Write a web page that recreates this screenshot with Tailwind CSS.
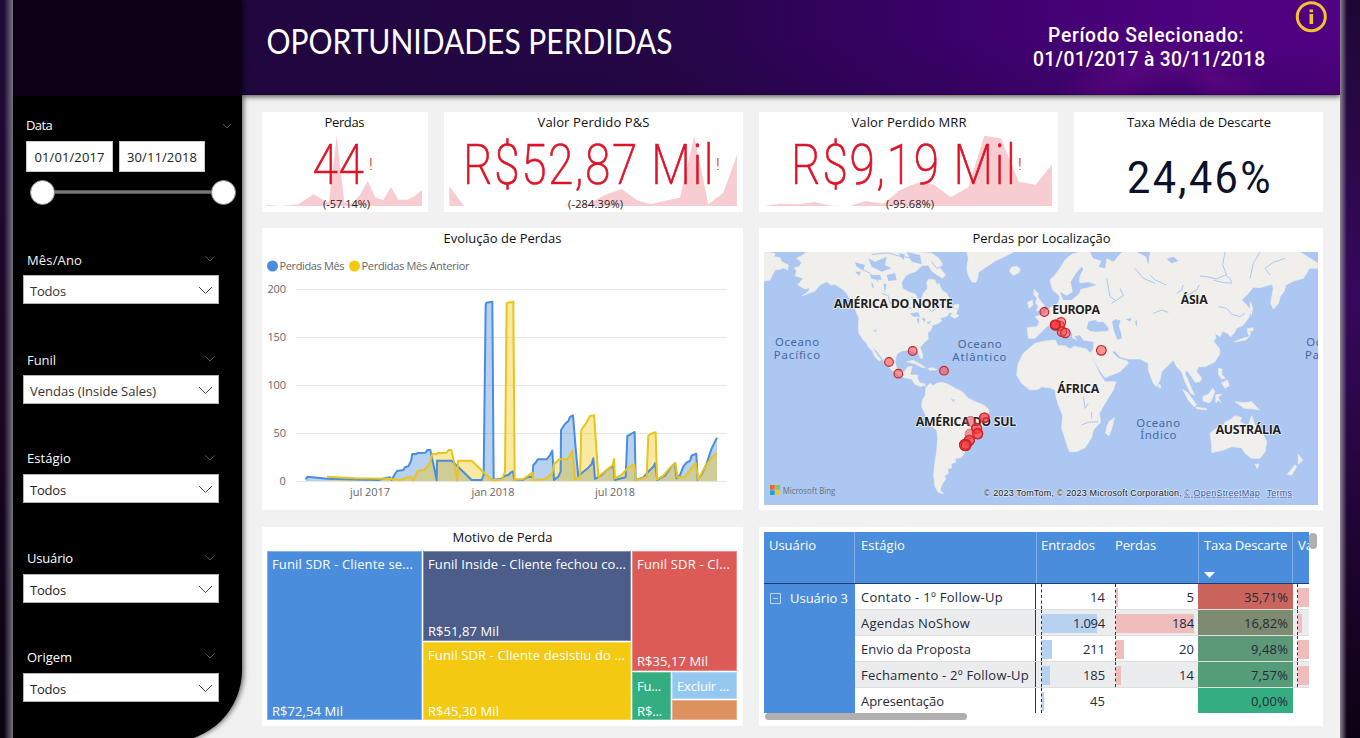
<!DOCTYPE html>
<html lang="pt-BR">
<head>
<meta charset="utf-8">
<title>Oportunidades Perdidas</title>
<script src="https://cdn.jsdelivr.net/npm/@tailwindcss/browser@4"></script>
</head>
<body class="w-[1360px] h-[738px] overflow-hidden bg-[#12031f] font-['Open_Sans','Noto_Sans',sans-serif]">
<div class="flex w-[1360px] h-[738px] overflow-hidden">

  <!-- left backdrop -->
  <div class="w-[13px] shrink-0 flex justify-end bg-linear-to-b from-[#1d0b38] via-[#1c0726] to-[#080410]">
    <div class="w-[9px] h-full bg-linear-to-r from-transparent to-[#77717f]"></div>
  </div>

  <!-- report -->
  <div class="relative w-[1327px] h-[738px] shrink-0 bg-[#f1f1f1] flex overflow-hidden">

    <!-- sidebar -->
    <aside class="relative z-20 w-[229px] h-[742px] shrink-0 bg-black rounded-br-[72px] shadow-[2px_0_5px_rgba(0,0,0,0.55)] text-white text-[13px]">
      <div class="h-24 bg-[#0d0017]"></div>
      <div class="h-[154px] pl-[13px] pt-5">
        <div class="flex items-center justify-between h-[19px] pr-[10px] leading-[19px]"><span data-w="26">Data</span>
          <svg class="w-[10px] h-[6px]" viewBox="0 0 10 6"><path d="M1 1l4 4 4-4" fill="none" stroke="#555" stroke-width="1"/></svg></div>
        <div class="flex gap-[6px] mt-[6px] text-[#222] leading-[31px] text-center">
          <div class="w-[87px] h-[31px] bg-white border border-[#c8c8c8]"><span data-w="70">01/01/2017</span></div>
          <div class="w-[86px] h-[31px] bg-white border border-[#c8c8c8]"><span data-w="70">30/11/2018</span></div>
        </div>
        <div class="flex items-center mt-[7px] ml-[4px] w-[206px] h-[26px]">
          <div class="size-[25px] shrink-0 rounded-full bg-white border border-[#888]"></div>
          <div class="grow h-[4px] bg-[#777] border-y border-[#555]"></div>
          <div class="size-[25px] shrink-0 rounded-full bg-white border border-[#888]"></div>
        </div>
      </div>
      <div class="pl-[10px]">
        <div class="h-[100px]">
          <div class="flex justify-between items-center h-[25px] pl-[4px] pr-[4px] w-[196px] pb-[4px]"><span data-w="55" class="font-medium text-[#f4f4f4]">Mês/Ano</span><svg class="w-[10px] h-[6px] mb-[3px]" viewBox="0 0 10 6"><path d="M.5.5L5 5 9.500.5" fill="none" stroke="#555"/></svg></div>
          <div class="w-[196px] h-[29px] bg-white border border-[#b5b5b5] flex items-center justify-between pl-[6px] pr-[5px] pt-[4px] text-[#333]"><span data-w="36">Todos</span><svg class="w-[15px] h-[9px] mb-[2px]" viewBox="0 0 15 9"><path d="M1 1l6.500 6.500L14 1" fill="none" stroke="#444"/></svg></div>
        </div>
        <div class="h-[99px]">
          <div class="flex justify-between items-center h-[25px] pl-[4px] pr-[4px] w-[196px] pb-[4px]"><span data-w="29" class="font-medium text-[#f4f4f4]">Funil</span><svg class="w-[10px] h-[6px] mb-[3px]" viewBox="0 0 10 6"><path d="M.5.5L5 5 9.500.5" fill="none" stroke="#555"/></svg></div>
          <div class="w-[196px] h-[29px] bg-white border border-[#b5b5b5] flex items-center justify-between pl-[6px] pr-[5px] pt-[4px] text-[#333]"><span data-w="126">Vendas (Inside Sales)</span><svg class="w-[15px] h-[9px] mb-[2px]" viewBox="0 0 15 9"><path d="M1 1l6.500 6.500L14 1" fill="none" stroke="#444"/></svg></div>
        </div>
        <div class="h-[100px]">
          <div class="flex justify-between items-center h-[25px] pl-[4px] pr-[4px] w-[196px] pb-[5px]"><span data-w="44">Estágio</span><svg class="w-[10px] h-[6px] mb-[2px]" viewBox="0 0 10 6"><path d="M.5.5L5 5 9.500.5" fill="none" stroke="#555"/></svg></div>
          <div class="w-[196px] h-[29px] bg-white border border-[#b5b5b5] flex items-center justify-between pl-[6px] pr-[5px] pt-[4px] text-[#222]"><span data-w="36">Todos</span><svg class="w-[15px] h-[9px] mb-[2px]" viewBox="0 0 15 9"><path d="M1 1l6.500 6.500L14 1" fill="none" stroke="#444"/></svg></div>
        </div>
        <div class="h-[99px]">
          <div class="flex justify-between items-center h-[25px] pl-[4px] pr-[4px] w-[196px] pb-[5px]"><span data-w="46">Usuário</span><svg class="w-[10px] h-[6px] mb-[2px]" viewBox="0 0 10 6"><path d="M.5.5L5 5 9.500.5" fill="none" stroke="#555"/></svg></div>
          <div class="w-[196px] h-[29px] bg-white border border-[#b5b5b5] flex items-center justify-between pl-[6px] pr-[5px] pt-[4px] text-[#222]"><span data-w="36">Todos</span><svg class="w-[15px] h-[9px] mb-[2px]" viewBox="0 0 15 9"><path d="M1 1l6.500 6.500L14 1" fill="none" stroke="#444"/></svg></div>
        </div>
        <div>
          <div class="flex justify-between items-center h-[25px] pl-[4px] pr-[4px] w-[196px] pb-[5px]"><span data-w="45">Origem</span><svg class="w-[10px] h-[6px] mb-[4px]" viewBox="0 0 10 6"><path d="M.5.5L5 5 9.500.5" fill="none" stroke="#555"/></svg></div>
          <div class="w-[196px] h-[29px] bg-white border border-[#b5b5b5] flex items-center justify-between pl-[6px] pr-[5px] pt-[4px] text-[#222]"><span data-w="36">Todos</span><svg class="w-[15px] h-[9px] mb-[2px]" viewBox="0 0 15 9"><path d="M1 1l6.500 6.500L14 1" fill="none" stroke="#444"/></svg></div>
        </div>
      </div>
    </aside>

    <div class="w-[1098px] shrink-0">
      <!-- header -->
      <header class="h-[95px] shadow-[0_2px_5px_rgba(0,0,0,0.6)] relative">
        <svg class="block w-[1098px] h-[95px]" viewBox="242 0 1098 95">
          <defs>
            <linearGradient id="hd" x1="0" x2="1" y1="0" y2="0"><stop offset="0" stop-color="#21063f"/><stop offset=".38" stop-color="#250646"/><stop offset=".52" stop-color="#30035a"/><stop offset=".64" stop-color="#3a0169"/><stop offset=".8" stop-color="#49017a"/><stop offset="1" stop-color="#510183"/></linearGradient>
            <radialGradient id="gl"><stop offset="0" stop-color="#7a0a90" stop-opacity=".35"/><stop offset="1" stop-color="#7a0a90" stop-opacity="0"/></radialGradient>
            <linearGradient id="sh" x1="0" x2="0" y1="0" y2="1"><stop offset=".4" stop-color="#180630" stop-opacity="0"/><stop offset="1" stop-color="#180630" stop-opacity=".2"/></linearGradient>
          </defs>
          <rect x="242" width="1098" height="95" fill="url(#hd)"/>
          <rect x="242" width="1098" height="95" fill="url(#sh)"/>
          <ellipse cx="1130" cy="75" rx="90" ry="28" fill="url(#gl)" transform="rotate(-22 1130 75)"/>
          <ellipse cx="1215" cy="80" rx="60" ry="20" fill="url(#gl)" transform="rotate(20 1215 78)"/>
          <rect x="242" y="94" width="1098" height="1" fill="#000" opacity=".25"/>
          <text x="266.500" y="53.500" font-family="Lato" font-size="34" fill="#fff" textLength="406" lengthAdjust="spacingAndGlyphs">OPORTUNIDADES PERDIDAS</text>
          <g font-family="Roboto" font-weight="500" font-size="20.500" fill="#fff" transform="scale(.94 1)">
            <text x="1115" y="42" textLength="208">Período Selecionado:</text>
            <text x="1099" y="66" textLength="247">01/01/2017 à 30/11/2018</text>
          </g>
          <circle cx="1311.300" cy="16.700" r="14" fill="none" stroke="#f2c230" stroke-width="3"/>
          <path d="M1309.500 9.500h3.600v2.700h-3.600zM1309.500 14h3.600v10h-3.600z" fill="#f2c230"/>
        </svg>
      </header>

      <main class="pl-5 pt-[17px] flex flex-col gap-4">
        <!-- KPI cards -->
        <div class="flex gap-4 h-[100px]">
          <section class="w-[166px] bg-white">
            <svg class="block w-[166px] h-[100px]" viewBox="262 112 166 100">
              <g transform="translate(255 105) scale(.33333)"><path fill="#f8cdd2" d="M35 303V300L80 303 130 298 175 268 213 290 222 292 245 92 268 292 290 298 315 270 338 228 362 278 385 285 408 246 430 284 457 284 478 274 501 256V303Z"/></g>
              <text x="324.500" y="127" font-size="13" fill="#111" textLength="40">Perdas</text>
              <text transform="translate(312.500 184) scale(.83 1)" font-family="Roboto" font-weight="200" stroke="#dd1528" stroke-width=".7" font-size="55.500" fill="#dd1528" textLength="62">44</text>
              <text x="369" y="170" font-family="Roboto" font-weight="300" font-size="17" fill="#dd1528">!</text>
              <text x="323" y="208" font-size="11" fill="#252423" textLength="47">(-57.14%)</text>
            </svg>
          </section>
          <section class="w-[299px] bg-white">
            <svg class="block w-[299px] h-[100px]" viewBox="444 112 299 100">
              <g transform="translate(255 105) scale(.33333)"><path fill="#f8cdd2" d="M583 303V244L627 303ZM920 303L1000 296 1050 270 1100 252 1145 286 1188 298 1230 287 1275 278 1318 92 1360 298 1405 263 1446 150V303Z"/></g>
              <text x="537.500" y="127" font-size="13" fill="#111" textLength="112">Valor Perdido P&amp;S</text>
              <text transform="translate(463 184) scale(.83 1)" font-family="Roboto" font-weight="200" stroke="#dd1528" stroke-width=".7" font-size="55.500" fill="#dd1528" textLength="302">R$52,87 Mil</text>
              <text x="716" y="170" font-family="Roboto" font-weight="300" font-size="17" fill="#dd1528">!</text>
              <text x="568" y="208" font-size="11" fill="#252423" textLength="55">(-284.39%)</text>
            </svg>
          </section>
          <section class="w-[299px] bg-white">
            <svg class="block w-[299px] h-[100px]" viewBox="759 112 299 100">
              <g transform="translate(750 105) scale(.33333)"><path fill="#f8cdd2" d="M45 303L90 296 145 298 195 291 245 302 300 303 347 288 400 296 450 255 500 234 550 238 602 277 655 247 703 92 753 100 806 230 857 239 906 178V303Z"/></g>
              <text x="851.500" y="127" font-size="13" fill="#111" textLength="115">Valor Perdido MRR</text>
              <text transform="translate(791 184) scale(.83 1)" font-family="Roboto" font-weight="200" stroke="#dd1528" stroke-width=".7" font-size="55.500" fill="#dd1528" textLength="271">R$9,19 Mil</text>
              <text x="1018" y="170" font-family="Roboto" font-weight="300" font-size="17" fill="#dd1528">!</text>
              <text x="886" y="208" font-size="11" fill="#252423" textLength="48">(-95.68%)</text>
            </svg>
          </section>
          <section class="w-[249px] bg-white">
            <svg class="block w-[249px] h-[100px]" viewBox="1074 112 249 100">
              <text x="1127" y="127" font-size="13" fill="#111" textLength="144">Taxa Média de Descarte</text>
              <text transform="translate(1127 192.500) scale(.92 1)" font-family="Roboto" font-size="45" fill="#0b1226" textLength="156">24,46%</text>
            </svg>
          </section>
        </div>

        <div class="flex gap-4 h-[282px]">
          <!-- line chart -->
          <section class="w-[481px] bg-white">
            <svg class="block w-[481px] h-[282px]" viewBox="262 228 481 282">
              <text x="443.500" y="243" font-size="13" fill="#111" textLength="118">Evolução de Perdas</text>
              <circle cx="272.500" cy="266" r="5.500" fill="#4a8ddc"/><circle cx="354.500" cy="266" r="5.500" fill="#f3c911"/>
              <g font-size="11" fill="#666">
                <text x="279.500" y="270" textLength="65">Perdidas Mês</text>
                <text x="361.500" y="270" textLength="108">Perdidas Mês Anterior</text>
                <text x="267.500" y="293" textLength="18.500">200</text><text x="267.500" y="341" textLength="18.500">150</text><text x="267.500" y="389" textLength="18.500">100</text><text x="273.500" y="437" textLength="12.500">50</text><text x="279.500" y="485">0</text>
                <text x="350" y="496" textLength="40">jul 2017</text><text x="471.500" y="496" textLength="43">jan 2018</text><text x="595" y="496" textLength="40">jul 2018</text>
              </g>
              <path d="M296 289.500H727M296 337.500H727M296 385.500H727M296 433.500H727M296 481.500H727" stroke="#e6e6e6"/>
              <g transform="translate(255 225) scale(.33333)" stroke-linejoin="round">
                <path fill="#4a8ddc" fill-opacity=".4" d="M152 768V763L158 755 216 761 370 765 395 758 405 757 410 765 418 750 426 738 445 735 450 727 460 724 468 708 472 687 485 687 487 684 512 683 517 675 526 675 530 695 540 740 545 766 546 707 590 707 610 726 650 765 680 765 686 750 692 240 694 233 712 230 716 764 738 762 750 752 760 750 768 742 774 739 778 764 805 764 815 757 832 755 835 720 843 712 848 703 875 703 885 690 892 677 897 765 910 755 917 740 918 615 930 597 940 588 945 576 954 571 962 670 970 755 985 740 1000 728 1010 717 1015 700 1020 762 1040 750 1055 735 1075 722 1079 765 1112 757 1117 633 1130 626 1139 621 1142 765 1165 757 1178 742 1195 725 1200 715 1207 765 1230 752 1245 730 1260 715 1265 760 1275 750 1285 725 1295 712 1305 708 1310 692 1324 686 1328 765 1340 748 1355 715 1370 670 1386 638V768Z"/>
                <path fill="#f3c911" fill-opacity=".4" d="M216 768V755L300 760 400 761 435 765 465 755 475 766 488 738 508 735 515 727 524 715 532 687 575 683 580 675 589 675 597 710 607 767 609 707 650 707 710 765 740 765 750 740 755 234 775 230 779 764 805 762 832 743 835 765 870 763 892 745 897 718 912 703 938 702 945 692 952 677 960 765 975 755 979 615 995 592 1005 573 1017 571 1022 640 1030 755 1055 735 1073 720 1077 702 1080 760 1100 750 1117 730 1138 718 1143 766 1175 755 1180 632 1193 624 1202 622 1206 763 1225 752 1245 728 1262 715 1267 757 1290 755 1305 735 1322 714 1330 764 1350 725 1365 705 1375 692 1386 686V768Z"/>
                <path fill="none" stroke="#4a8ddc" stroke-width="6" d="M152 763L158 755 216 761 370 765 395 758 405 757 410 765 418 750 426 738 445 735 450 727 460 724 468 708 472 687 485 687 487 684 512 683 517 675 526 675 530 695 540 740 545 766 546 707 590 707 610 726 650 765 680 765 686 750 692 240 694 233 712 230 716 764 738 762 750 752 760 750 768 742 774 739 778 764 805 764 815 757 832 755 835 720 843 712 848 703 875 703 885 690 892 677 897 765 910 755 917 740 918 615 930 597 940 588 945 576 954 571 962 670 970 755 985 740 1000 728 1010 717 1015 700 1020 762 1040 750 1055 735 1075 722 1079 765 1112 757 1117 633 1130 626 1139 621 1142 765 1165 757 1178 742 1195 725 1200 715 1207 765 1230 752 1245 730 1260 715 1265 760 1275 750 1285 725 1295 712 1305 708 1310 692 1324 686 1328 765 1340 748 1355 715 1370 670 1386 638"/>
                <path fill="none" stroke="#eac41c" stroke-width="6" d="M216 755L300 760 400 761 435 765 465 755 475 766 488 738 508 735 515 727 524 715 532 687 545 687 548 684 575 683 580 675 589 675 597 710 607 767 609 707 650 707 710 765 740 765 750 740 755 234 775 230 779 764 805 762 832 743 835 765 870 763 892 745 897 718 912 703 938 702 945 692 952 677 960 765 975 755 979 615 995 592 1005 573 1017 571 1022 640 1030 755 1055 735 1073 720 1077 702 1080 760 1100 750 1117 730 1138 718 1143 766 1175 755 1180 632 1193 624 1202 622 1206 763 1225 752 1245 728 1262 715 1267 757 1290 755 1305 735 1322 714 1330 764 1350 725 1365 705 1375 692 1386 686"/>
              </g>
            </svg>
          </section>

          <!-- map -->
          <section class="w-[564px] bg-white">
            <svg class="block w-[564px] h-[282px]" viewBox="759 228 564 282">
              <text x="972.500" y="243" font-size="13" fill="#111" textLength="138">Perdas por Localização</text>
              <svg x="764" y="252" width="554" height="253" viewBox="27 81 1662 759" preserveAspectRatio="none">
                <rect x="27" y="81" width="1662" height="759" fill="#abc7f2"/>
                <g fill="#f0efeb" stroke="#f0efeb" stroke-width="2" stroke-linejoin="round">
                  <path d="M27 81L60 85 58 95 75 98 80 110 100 120 98 135 85 128 75 133 60 135 52 150 45 165 27 168Z"/>
                  <path d="M155 81L140 92 125 100 140 112 133 125 118 128 125 138 120 152 145 160 128 180 150 192 165 188 160 200 142 212 180 198 195 180 215 170 228 180 240 178 262 192 275 205 284 220 290 235 300 252 305 265 312 280 310 300 312 325 325 345 333 352 340 365 352 378 358 392 372 408 378 405 360 380 352 368 366 378 380 398 392 415 405 430 430 450 450 458 470 462 480 478 498 485 506 480 512 484 508 476 495 474 488 462 487 450 465 450 468 438 472 424 458 426 448 440 430 440 424 425 420 410 424 392 428 385 440 378 460 375 475 380 487 378 492 388 496 400 503 400 502 385 495 368 505 355 520 342 518 325 530 312 532 300 548 296 560 288 555 280 575 274 585 262 600 270 608 256 592 250 580 256 572 244 588 232 582 218 575 205 560 195 552 175 545 180 540 165 522 162 515 172 518 190 505 205 498 228 488 222 482 208 460 200 442 190 440 172 452 152 465 145 482 140 500 122 520 120 530 138 550 152 562 160 572 150 555 130 562 118 552 100 530 85 500 81Z"/>
                  <path d="M635 81L640 100 635 130 640 150 650 170 662 172 668 160 670 142 695 125 720 108 748 95 775 81Z"/>
                  <path d="M764 140L768 128 785 124 796 132 790 144 775 151Z"/>
                  <path d="M586 272L598 262 612 272 600 280ZM596 240L612 238 610 252 598 250Z"/>
                  <path d="M838 194L850 206 848 216 860 232 868 240 864 252 844 258 850 244 842 234 846 220 836 208ZM818 232L832 226 834 240 822 250Z"/>
                  <path d="M512 490L525 475 535 482 545 475 560 472 580 478 600 490 622 500 640 520 660 530 690 542 702 555 698 575 685 590 680 615 672 638 650 650 638 665 632 680 618 698 600 700 602 712 588 716 590 728 578 732 580 745 568 752 572 762 562 776 555 795 566 806 550 802 540 785 536 750 540 710 545 680 548 640 545 615 525 600 512 570 500 545 502 525 512 510Z"/>
                  <path d="M455 410L475 406 500 420 512 428 500 427 480 416ZM518 430L535 428 546 434 525 436Z"/>
                  <path d="M840 355L870 348 900 345 910 362 930 362 945 372 958 364 995 372 1005 385 1020 415 1033 445 1050 470 1083 470 1075 495 1050 535 1033 565 1037 592 1015 615 1010 638 990 668 965 680 943 680 933 650 920 610 923 570 910 540 903 515 900 495 885 488 860 485 850 493 825 495 800 475 785 450 790 415 805 385 820 372Z"/>
                  <path d="M1055 605L1062 590 1078 578 1072 605 1062 632 1052 625Z"/>
                  <g transform="translate(855)">
                    <path d="M-35 340L-38 308 -8 305 -2 290 -15 275 10 268 30 248 55 235 60 215 50 205 38 195 30 165 45 150 60 130 75 105 95 88 120 81H780L834 115V130L808 130 800 145 790 160 760 168 738 180 732 200 720 215 716 235 700 252 692 235 700 190 696 178 660 188 640 187 625 205 605 225 620 240 632 255 628 275 610 300 590 310 582 325 572 335 562 325 548 318 540 335 525 325 528 340 520 348 538 370 540 385 525 410 495 425 475 425 470 440 485 460 480 470 465 472 455 455 440 435 435 445 450 480 463 510 452 505 435 470 425 440 410 425 400 405 385 420 365 440 360 465 350 485 340 475 325 435 325 415 300 402 265 402 240 395 225 378 215 380 235 400 262 408 265 415 240 440 195 458 185 445 165 410 150 385 160 372 162 350 130 345 120 330 102 332 110 345 98 338 90 318 75 305 62 300 85 320 88 335 62 322 50 308 40 300 22 303 0 325 -15 340Z"/>
                    <path d="M583 350L600 348 618 345 630 330 632 322 622 318 628 335 608 340ZM620 312L640 308 638 318 625 318ZM632 230L638 250 634 270 630 250Z"/>
                    <path d="M488 515L505 508 518 490 525 500 520 512 512 530 505 533 490 528ZM428 493L445 505 470 540 462 545 445 525ZM468 546L500 551 498 555 470 551ZM527 510L545 508 534 516 542 532 534 525 528 534ZM585 530L610 533 635 530 658 555 640 552 612 550 600 540ZM536 430L546 432 545 448 556 460 545 462 536 448ZM545 475L562 465 568 482 555 490Z"/>
                    <path d="M510 625L530 610 550 600 556 590 570 585 585 572 605 578 600 590 625 603 635 572 645 600 665 620 680 650 675 680 660 700 635 700 615 685 605 668 575 665 550 675 515 683 515 660ZM645 718L657 718 652 731ZM742 748L765 720 770 725 755 750ZM775 688L788 705 775 718ZM357 478L362 480 362 488 356 488Z"/>
                  </g>
                </g>
                <g fill="#abc7f2">
                  <path d="M340 100L360 110 395 95 390 120 410 130 380 140 350 125ZM345 150L375 150 380 165 350 162ZM455 81L470 110 500 118 495 90ZM395 150L420 145 425 165 400 168ZM430 85L450 88 445 105ZM300 112L330 120 325 135 305 125ZM300 140L318 140 312 152ZM385 175L395 178 390 205ZM350 168L358 190 350 185ZM355 316L366 316 362 322ZM465 265L490 262 495 275 475 275ZM485 280L493 280 490 300ZM500 278L512 282 508 292ZM515 292L530 288 520 298Z"/>
                  <g transform="translate(855)">
                    <path d="M60 200L80 212 98 200 92 170 108 145 125 125 130 132 118 155 118 175 145 172 170 180 140 188 122 192 118 205 95 225 70 225ZM160 100L185 108 175 125 195 130 200 100 220 110 245 81 150 81ZM140 310L145 290 165 285 175 292 190 290 205 308 205 318 165 320 150 318ZM216 290L228 282 242 288 236 302 242 320 246 340 232 344 222 318ZM290 81L330 81 325 120 318 95ZM380 102L400 95 415 108 395 115ZM82 308L90 316 98 330 92 335 80 318ZM258 282L275 280 270 290ZM285 290L292 284 290 305Z"/>
                  </g>
                </g>
                <g fill="none" stroke="#abc7f2" stroke-width="3" stroke-linejoin="round">
                  <path d="M380 205L400 212 405 235 430 225 445 245 470 250M470 215L485 240 510 240 530 260 575 225M505 225L530 235 550 225M350 88L400 84 440 95 480 100M315 130L345 145 370 170M530 110L545 130 560 125M590 520L595 530 600 522M985 515L990 550 1000 535M1010 560L1010 580M980 600L1000 592 1030 590"/>
                  <g transform="translate(855)">
                    <path d="M480 153L500 155 530 162 555 150 570 160 575 175 545 172 520 165M555 81L548 120 560 150M660 81L640 115 630 160M735 100L700 112 675 130 690 150M535 245L560 250 575 268 600 275 615 265M330 150L345 165 380 180M200 160L210 215 225 225M215 235L250 212 240 190M410 205L425 195 430 180M440 212L470 195 478 180M285 130L310 160 345 175M340 265L365 255 385 262"/>
                  </g>
                </g>
                <g font-weight="700" font-size="37" fill="#222" stroke="#fff" stroke-opacity=".65" stroke-width="5" paint-order="stroke" stroke-linejoin="round">
                  <text x="237" y="248" textLength="357">AMÉRICA DO NORTE</text>
                  <text x="892" y="267" textLength="143">EUROPA</text>
                  <text x="1277" y="236" textLength="81">ÁSIA</text>
                  <text x="907" y="504" textLength="126">ÁFRICA</text>
                  <text x="482" y="604" textLength="302">AMÉRICA DO SUL</text>
                  <text x="1382" y="628" textLength="196">AUSTRÁLIA</text>
                </g>
                <g font-size="34" fill="#47699f" font-family="Noto Sans">
                  <text x="60" y="364" textLength="132">Oceano</text><text x="56" y="401" textLength="139">Pacífico</text>
                  <text x="608" y="370" textLength="132">Oceano</text><text x="592" y="407" textLength="162">Atlântico</text>
                  <text x="1144" y="606" textLength="131">Oceano</text><text x="1156" y="643" textLength="108">Índico</text>
                  <text x="1654" y="364" textLength="132">Oceano</text><text x="1650" y="401" textLength="139">Pacífico</text>
                </g>
                <g fill="#ff3b3b" fill-opacity=".5" stroke="#c8242c" stroke-width="3.500">
                  <circle cx="868" cy="261" r="13"/><circle cx="473" cy="378" r="13"/><circle cx="402" cy="411" r="13"/><circle cx="430" cy="446" r="13"/><circle cx="567" cy="437" r="13"/><circle cx="1039" cy="376" r="14.500"/>
                  <circle cx="918" cy="292" r="14"/><circle cx="914" cy="302" r="14"/><circle cx="921" cy="320" r="14"/><circle cx="931" cy="324" r="14"/><circle cx="901" cy="300" r="15"/><circle cx="901" cy="300" r="15"/><circle cx="902" cy="300" r="12"/>
                  <circle cx="688" cy="578" r="14"/><circle cx="688" cy="578" r="14"/><circle cx="665" cy="610" r="15"/><circle cx="665" cy="610" r="15"/><circle cx="668" cy="625" r="15"/><circle cx="668" cy="627" r="15"/><circle cx="643" cy="646" r="15"/><circle cx="643" cy="646" r="15"/><circle cx="631" cy="660" r="17"/><circle cx="631" cy="660" r="17"/><circle cx="632" cy="660" r="13"/>
                </g>
                <g fill="#e83b45" fill-opacity=".5" stroke="#c8242c" stroke-opacity=".4" stroke-width="3"><circle cx="647" cy="589" r="15"/><circle cx="645" cy="627" r="15"/></g>
                <path d="M45 780h14v14h-14z" fill="#f1652a"/><path d="M61 780h14v14h-14z" fill="#8dc63f"/><path d="M45 796h14v14h-14z" fill="#1ba1e2"/><path d="M61 796h14v14h-14z" fill="#ffc20e"/>
                <text x="83" y="806" font-size="25" fill="#6a7078" textLength="158" lengthAdjust="spacingAndGlyphs">Microsoft Bing</text>
                <g font-family="Liberation Sans" font-size="27" stroke="#fff" stroke-opacity=".55" stroke-width="4" paint-order="stroke">
                  <text x="686" y="812" fill="#222" textLength="594">© 2023 TomTom, © 2023 Microsoft Corporation,</text>
                  <text x="1287" y="812" fill="#3a55a0" text-decoration="underline" textLength="227">© OpenStreetMap</text>
                  <text x="1535" y="812" fill="#3a55a0" text-decoration="underline" textLength="76">Terms</text>
                </g>
              </svg>
            </svg>
          </section>
        </div>

        <div class="flex gap-4 h-[199px] mt-px">
          <!-- treemap -->
          <section class="w-[481px] bg-white px-[5px] text-white text-[13px]">
            <h2 class="h-6 leading-[21px] text-center text-[#111]"><span data-w="100">Motivo de Perda</span></h2>
            <div class="flex gap-px h-[169px] leading-[18px] whitespace-nowrap">
              <div class="w-[155px] bg-[#4a8ddc] border border-white/30 flex flex-col justify-between px-1 pt-[3px]"><span><span data-w="141">Funil SDR - Cliente se...</span></span><span class="-mb-px"><span data-w="71">R$72,54 Mil</span></span></div>
              <div class="w-[208px] flex flex-col gap-px">
                <div class="h-[90px] bg-[#4c5d8a] border border-white/30 flex flex-col justify-between px-1 pt-[3px]"><span><span data-w="198">Funil Inside - Cliente fechou co...</span></span><span><span data-w="71">R$51,87 Mil</span></span></div>
                <div class="h-[78px] bg-[#f3c911] border border-white/30 flex flex-col justify-between px-1 pt-[3px]"><span><span data-w="197">Funil SDR - Cliente desistiu do ...</span></span><span class="-mb-px"><span data-w="71">R$45,30 Mil</span></span></div>
              </div>
              <div class="w-[105px] flex flex-col gap-px">
                <div class="h-[120px] bg-[#dc5b57] border border-white/30 flex flex-col justify-between px-1 pt-[3px]"><span><span data-w="93">Funil SDR - Cl...</span></span><span><span data-w="71">R$35,17 Mil</span></span></div>
                <div class="flex gap-px h-[48px]">
                  <div class="w-[39px] bg-[#33ae81] border border-white/30 flex flex-col justify-between px-1 pt-[4px]"><span><span data-w="24">Fu...</span></span><span class="-mb-px"><span data-w="25">R$...</span></span></div>
                  <div class="w-[65px] flex flex-col gap-px">
                    <div class="h-[27px] bg-[#95c8f0] border border-white/30 px-1 pt-[4px]"><span data-w="52">Excluir ...</span></div>
                    <div class="h-[20px] bg-[#dd915f] border border-white/30"></div>
                  </div>
                </div>
              </div>
            </div>
          </section>

          <!-- matrix -->
          <section class="w-[564px] bg-white pl-[5px] pt-[5px] text-[13px] text-[#252a3a]">
            <div class="flex h-[181px]">
              <div class="w-[545px] h-[181px] overflow-hidden">
                <div class="flex h-[52px] bg-[#4a8ddc] border-b border-[#1d3f70] text-white leading-[26px] whitespace-nowrap">
                  <div class="w-[91px] shrink-0 pl-[5px] border-r border-white/30"><span data-w="47">Usuário</span></div>
                  <div class="w-[182px] shrink-0 pl-[6px] border-r border-white/30"><span data-w="44">Estágio</span></div>
                  <div class="w-[73px] shrink-0 pl-[4px]"><span data-w="54">Entrados</span></div>
                  <div class="w-[89px] shrink-0 pl-[5px] border-r border-white/30"><span data-w="41">Perdas</span></div>
                  <div class="w-[94px] shrink-0 pl-[5px] border-r border-white/30"><span data-w="83">Taxa Descarte</span>
                    <svg class="block mt-[14px] w-[11px] h-[6px]" viewBox="0 0 11 6"><path d="M0 0h11L5.500 6z" fill="#fff"/></svg></div>
                  <div class="shrink-0 pl-[5px]"><span data-w="31">Valor</span></div>
                </div>
                <div class="flex h-[129px]">
                  <div class="w-[91px] shrink-0 bg-[#4a8ddc] text-white h-full flex gap-[9px] pl-[6px] leading-[28px]">
                    <svg class="w-[11px] h-[11px] mt-[9px]" viewBox="0 0 11 11"><path d="M.5.5h10v10H.5zM3 5.500h5" fill="none" stroke="#bcd6f5"/></svg><span class="font-medium"><span data-w="58">Usuário 3</span></span>
                  </div>
                  <div class="w-[454px] shrink-0 leading-[27px] whitespace-nowrap">
                    <div class="flex h-[26px] border-b border-[#ddd]">
                      <div class="w-[181px] pl-[6px] border-r border-[#333] shrink-0"><span data-w="142">Contato - 1º Follow-Up</span></div>
                      <div class="w-[79px] flex pl-[5px] shrink-0 items-start"><div class="w-px h-full border-l border-dashed border-[#334]"></div><div class="grow text-right pr-[10px]"><span data-w="15">14</span></div></div>
                      <div class="w-[83px] flex shrink-0 items-start"><div class="h-full border-l border-dashed border-[#433]"></div><div class="w-[2px] h-[19px] mt-1 bg-[#f1bcbc]"></div><div class="grow text-right pr-[4px]">5</div></div>
                      <div class="w-[95px] h-[25px] bg-[#cb645c] text-right pr-[5px] shrink-0"><span data-w="44">35,71%</span></div>
                      <div class="w-[16px] pl-[4px] flex shrink-0"><div class="h-full border-l border-dashed border-[#433]"></div><div class="w-[11px] h-[19px] mt-1 bg-[#f1bcbc]"></div></div>
                    </div>
                    <div class="flex h-[26px] border-b border-[#ddd] bg-[#ebecee]">
                      <div class="w-[181px] pl-[6px] border-r border-[#333] shrink-0"><span data-w="109">Agendas NoShow</span></div>
                      <div class="w-[79px] flex pl-[5px] shrink-0 items-start"><div class="h-full border-l border-dashed border-[#334]"></div><div class="w-[55px] h-[19px] mt-1 bg-[#b7d1f1]"></div><div class="grow -ml-10 text-right pr-[10px]"><span data-w="32">1.094</span></div></div>
                      <div class="w-[83px] flex shrink-0 items-start"><div class="h-full border-l border-dashed border-[#433]"></div><div class="w-[78px] h-[19px] mt-1 bg-[#f1bcbc]"></div><div class="grow -ml-10 text-right pr-[4px]"><span data-w="22">184</span></div></div>
                      <div class="w-[95px] h-[25px] bg-[#7d8c70] text-right pr-[5px] shrink-0"><span data-w="44">16,82%</span></div>
                      <div class="w-[16px] pl-[4px] flex shrink-0"><div class="h-full border-l border-dashed border-[#433]"></div><div class="w-[4px] h-[19px] mt-1 bg-[#f1bcbc]"></div></div>
                    </div>
                    <div class="flex h-[26px] border-b border-[#ddd]">
                      <div class="w-[181px] pl-[6px] border-r border-[#333] shrink-0"><span data-w="110">Envio da Proposta</span></div>
                      <div class="w-[79px] flex pl-[5px] shrink-0 items-start"><div class="h-full border-l border-dashed border-[#334]"></div><div class="w-[10px] h-[19px] mt-1 bg-[#b7d1f1]"></div><div class="grow text-right pr-[10px]"><span data-w="22">211</span></div></div>
                      <div class="w-[83px] flex shrink-0 items-start"><div class="h-full border-l border-dashed border-[#433]"></div><div class="w-[8px] h-[19px] mt-1 bg-[#f1bcbc]"></div><div class="grow text-right pr-[4px]"><span data-w="15">20</span></div></div>
                      <div class="w-[95px] h-[25px] bg-[#5b9978] text-right pr-[5px] shrink-0"><span data-w="37">9,48%</span></div>
                      <div class="w-[16px] pl-[4px] flex shrink-0"><div class="h-full border-l border-dashed border-[#433]"></div><div class="w-[11px] h-[19px] mt-1 bg-[#f1bcbc]"></div></div>
                    </div>
                    <div class="flex h-[26px] border-b border-[#ddd] bg-[#ebecee]">
                      <div class="w-[181px] pl-[6px] border-r border-[#333] shrink-0"><span data-w="168">Fechamento - 2º Follow-Up</span></div>
                      <div class="w-[79px] flex pl-[5px] shrink-0 items-start"><div class="h-full border-l border-dashed border-[#334]"></div><div class="w-[8px] h-[19px] mt-1 bg-[#b7d1f1]"></div><div class="grow text-right pr-[10px]"><span data-w="22">185</span></div></div>
                      <div class="w-[83px] flex shrink-0 items-start"><div class="h-full border-l border-dashed border-[#433]"></div><div class="w-[5px] h-[19px] mt-1 bg-[#f1bcbc]"></div><div class="grow text-right pr-[4px]"><span data-w="15">14</span></div></div>
                      <div class="w-[95px] h-[25px] bg-[#549d78] text-right pr-[5px] shrink-0"><span data-w="37">7,57%</span></div>
                      <div class="w-[16px] pl-[4px] flex shrink-0"><div class="h-full border-l border-dashed border-[#433]"></div><div class="w-[11px] h-[19px] mt-1 bg-[#f1bcbc]"></div></div>
                    </div>
                    <div class="flex h-[25px]">
                      <div class="w-[181px] pl-[6px] border-r border-[#333] shrink-0"><span data-w="83">Apresentação</span></div>
                      <div class="w-[79px] flex pl-[5px] shrink-0 items-start"><div class="h-full border-l border-dashed border-[#334]"></div><div class="w-[2px] h-[19px] mt-1 bg-[#b7d1f1]"></div><div class="grow text-right pr-[10px]"><span data-w="15">45</span></div></div>
                      <div class="w-[83px] shrink-0"></div>
                      <div class="w-[95px] bg-[#34ae81] text-right pr-[5px] shrink-0"><span data-w="37">0,00%</span></div>
                    </div>
                  </div>
                </div>
              </div>
              <div class="w-2 h-4 mt-px rounded-full bg-[#b0b0b0]"></div>
            </div>
            <div class="w-[202px] h-[7px] ml-px rounded-full bg-[#b0b0b0]"></div>
          </section>
        </div>
      </main>
    </div>
  </div>

  <!-- right backdrop -->
  <div class="w-5 shrink-0 bg-linear-to-b from-[#1e0733] via-[#36085c] via-40% to-[#0d0213]">
    <div class="w-[7px] h-full bg-linear-to-r from-[#8a8492] to-transparent"></div>
  </div>
</div>
<script>
  // Spread letters so that each label keeps its designed width with any fallback font.
  function fitLabels() {
    document.querySelectorAll('[data-w]').forEach(function (el) {
      el.style.display = 'inline-block';
      el.style.whiteSpace = 'nowrap';
      el.style.letterSpacing = '0px';
      var n = el.textContent.length, w = el.getBoundingClientRect().width;
      el.style.letterSpacing = ((el.dataset.w - w) / n) + 'px';
    });
  }
  fitLabels();
  window.addEventListener('load', fitLabels);
  document.fonts.ready.then(fitLabels);
  requestAnimationFrame(function () { requestAnimationFrame(fitLabels); });
</script>
</body>
</html>
